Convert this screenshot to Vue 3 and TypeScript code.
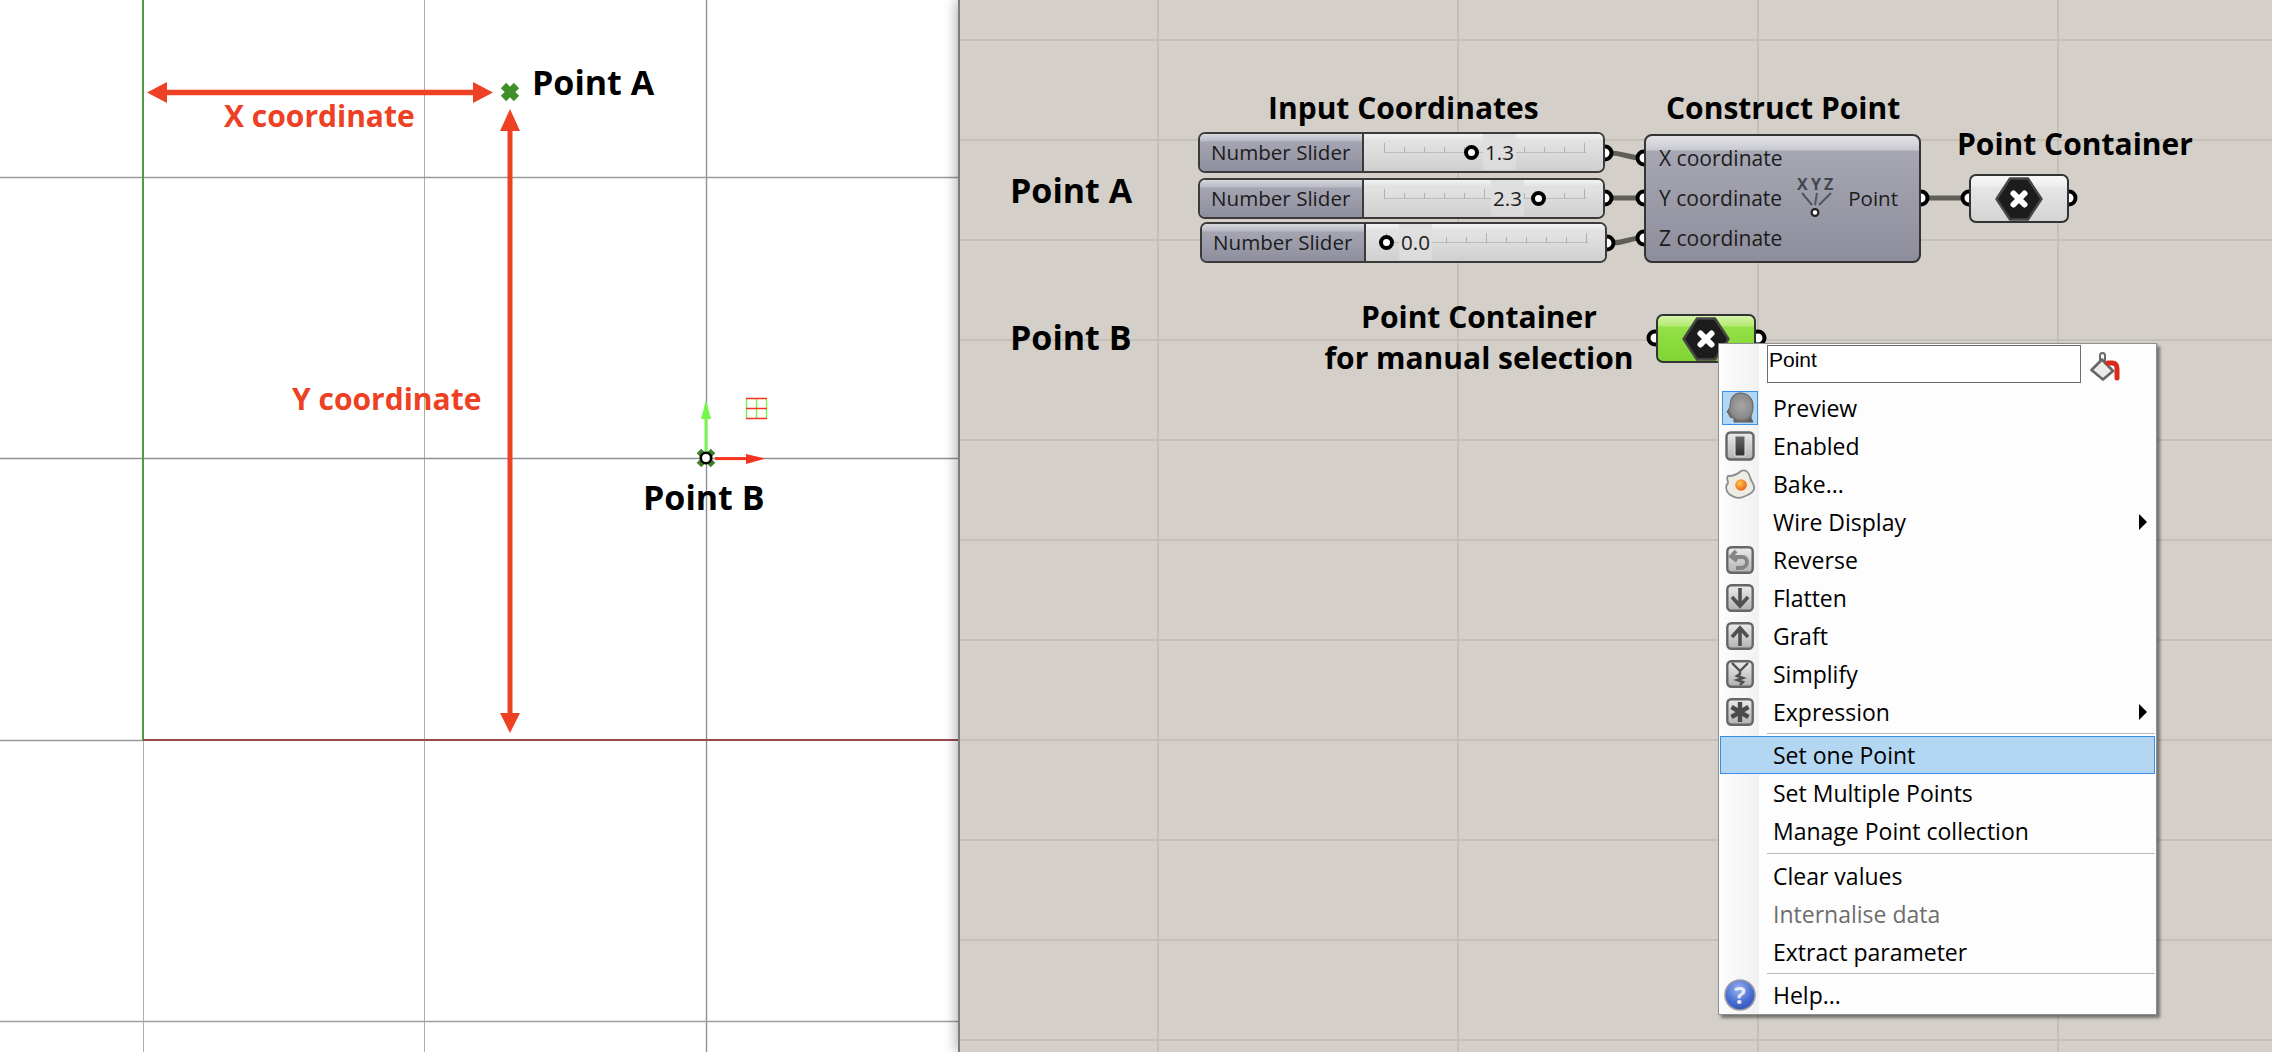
<script setup lang="ts">
interface Slider {
  x: number
  y: number
  knob: number
  textX: number
  value: string
}

interface Label {
  text: string
  x: number
  y: number
}

interface MenuItem {
  label?: string
  icon?: string
  submenu?: boolean
  active?: boolean
  disabled?: boolean
  sep?: 'normal' | 'wide'
}

const sliders: Slider[] = [
  { x: 238, y: 132, knob: 273, textX: 287, value: '1.3' },
  { x: 238, y: 178, knob: 340, textX: 295, value: '2.3' },
  { x: 240, y: 222, knob: 186, textX: 201, value: '0.0' }
]

const ticks = Array.from({ length: 11 }, (_, i) => ({ x: i * 20 + 1, tall: i === 0 || i === 5 || i === 10 }))

const leftLabels: Label[] = [
  { text: 'Point A', x: 532, y: 60 },
  { text: 'Point B', x: 643, y: 475 }
]

const canvasLabels: Label[] = [
  { text: 'Point A', x: 50, y: 168 },
  { text: 'Point B', x: 50, y: 315 }
]

const headings: Label[] = [
  { text: 'Input Coordinates', x: 308, y: 87 },
  { text: 'Construct Point', x: 706, y: 87 },
  { text: 'Point Container', x: 997, y: 123 }
]

const containers = [
  { x: 1009, y: 174, selected: false },
  { x: 696, y: 314, selected: true }
]

const menuItems: MenuItem[] = [
  { label: 'Preview', icon: 'preview' },
  { label: 'Enabled', icon: 'enabled' },
  { label: 'Bake...', icon: 'bake' },
  { label: 'Wire Display', submenu: true },
  { label: 'Reverse', icon: 'reverse' },
  { label: 'Flatten', icon: 'flatten' },
  { label: 'Graft', icon: 'graft' },
  { label: 'Simplify', icon: 'simplify' },
  { label: 'Expression', icon: 'expression', submenu: true },
  { sep: 'normal' },
  { label: 'Set one Point', active: true },
  { label: 'Set Multiple Points' },
  { label: 'Manage Point collection' },
  { sep: 'wide' },
  { label: 'Clear values' },
  { label: 'Internalise data', disabled: true },
  { label: 'Extract parameter' },
  { sep: 'normal' },
  { label: 'Help...', icon: 'help' }
]

const ports: [number, number][] = [
  [645, 153], [645, 198], [647, 243],
  [684, 158], [684, 198], [684, 238],
  [961, 198], [1009, 198], [1109, 198],
  [695, 338], [798, 338]
]

const wires: string[] = [
  'M650 153 C664 153 668 158 682 158',
  'M650 198 L682 198',
  'M652 243 C666 243 668 238 682 238',
  'M966 198 L1006 198'
]
</script>

<template>
  <div class="page">
    <svg class="defs" width="0" height="0">
      <defs>
        <linearGradient id="btn-fill" x1="0" y1="0" x2="0" y2="1">
          <stop offset="0" stop-color="#ececec" />
          <stop offset="1" stop-color="#b2b2b2" />
        </linearGradient>
        <linearGradient id="switch-fill" x1="0" y1="0" x2="0" y2="1">
          <stop offset="0" stop-color="#6a6a6a" />
          <stop offset="1" stop-color="#2e2e2e" />
        </linearGradient>
        <radialGradient id="head-fill" cx="0.55" cy="0.45" r="0.6">
          <stop offset="0" stop-color="#a6a6a6" />
          <stop offset="0.7" stop-color="#8a8a8a" />
          <stop offset="1" stop-color="#5a5a5a" />
        </radialGradient>
        <radialGradient id="yolk-fill" cx="0.4" cy="0.35" r="0.7">
          <stop offset="0" stop-color="#ffc94a" />
          <stop offset="1" stop-color="#ea5a12" />
        </radialGradient>
        <radialGradient id="help-fill" cx="0.45" cy="0.3" r="0.8">
          <stop offset="0" stop-color="#9db4ee" />
          <stop offset="0.55" stop-color="#4a6fd6" />
          <stop offset="1" stop-color="#2a49b0" />
        </radialGradient>
      </defs>
    </svg>

    <section class="viewport">
      <svg class="scene" width="960" height="1052" viewBox="0 0 960 1052">
        <g fill="none">
          <path d="M424.5 0V1052" stroke="#adadad" />
          <path d="M706.5 0V1052" stroke="#8d9194" stroke-width="1.4" />
          <path d="M0 177.5H960" stroke="#9a9a9a" stroke-width="1.6" />
          <path d="M0 458.5H960" stroke="#8c9396" stroke-width="1.6" />
          <path d="M0 740.5H143" stroke="#9a9a9a" stroke-width="1.6" />
          <path d="M0 1021.5H960" stroke="#a0a0a0" stroke-width="1.4" />
          <path d="M143.5 741V1052" stroke="#adadad" />
          <path d="M143 0V741" stroke="#4f9a45" stroke-width="2" />
          <path d="M143 740H960" stroke="#99494a" stroke-width="2" />
        </g>
        <g fill="#ee4023">
          <path d="M147 92.5 167 82V89.8H473V82L493 92.5 473 103V95.2H167V103Z" />
          <path d="M510 109 520 131H512.5V713H520L510 733 500 713H507.5V131H500Z" />
        </g>
        <path d="M503.5 85.5 516.5 98.5M516.5 85.5 503.5 98.5" stroke="#3f8f2a" stroke-width="7.5" fill="none" />
        <g>
          <path d="M699 451 713 465M713 451 699 465" stroke="#3c7f26" stroke-width="6.5" fill="none" />
          <path d="M706 452V418" stroke="#74f64a" stroke-width="3" />
          <path d="M706 400 711 419H701Z" fill="#74f64a" />
          <path d="M715 458.6H747" stroke="#f6341f" stroke-width="3" />
          <path d="M746 454 765 458.6 746 464Z" fill="#f6341f" />
          <circle cx="706" cy="458" r="5.2" fill="#fff" stroke="#000" stroke-width="2.6" />
        </g>
        <g fill="none" stroke-width="1.4">
          <path d="M746.5 398V419M756.5 398V419M766.5 398V419" stroke="#74f64a" />
          <path d="M746 398.5H767M746 408.5H767M746 418.5H767" stroke="#f6341f" />
        </g>
      </svg>
      <span v-for="l in leftLabels" :key="l.text" class="title" :style="{ left: l.x + 'px', top: l.y + 'px' }">{{ l.text }}</span>
      <span class="axis axis-x">X coordinate</span>
      <span class="axis axis-y">Y coordinate</span>
    </section>

    <section class="canvas">
      <svg class="wires" width="1312" height="1052" viewBox="0 0 1312 1052">
        <path v-for="w in wires" :key="w" :d="w" fill="none" stroke="#5f5e57" stroke-width="5" />
        <circle v-for="p in ports" :key="p[0] + '-' + p[1]" :cx="p[0]" :cy="p[1]" r="6.5" fill="#fff" stroke="#000" stroke-width="4" />
      </svg>

      <span v-for="l in canvasLabels" :key="l.text" class="title" :style="{ left: l.x + 'px', top: l.y + 'px' }">{{ l.text }}</span>
      <span v-for="h in headings" :key="h.text" class="heading" :style="{ left: h.x + 'px', top: h.y + 'px' }">{{ h.text }}</span>
      <div class="heading manual">Point Container<br />for manual selection</div>

      <div v-for="s in sliders" :key="s.value" class="slider" :style="{ left: s.x + 'px', top: s.y + 'px' }">
        <div class="slider-name">Number Slider</div>
        <div class="slider-track">
          <svg class="ticks" width="204" height="12" viewBox="0 0 204 12">
            <path d="M1 10.5H203" stroke="#bcbcbc" fill="none" />
            <path
              v-for="t in ticks"
              :key="t.x"
              :d="`M${t.x + 0.5} ${t.tall ? 1 : 5}V11`"
              stroke="#b0b0b0"
              fill="none"
            />
          </svg>
          <span class="slider-value" :style="{ left: s.textX - 166 + 'px' }">{{ s.value }}</span>
          <span class="slider-knob" :style="{ left: s.knob - 166 + 'px' }"></span>
        </div>
      </div>

      <div class="construct">
        <div class="inputs">
          <span>X coordinate</span>
          <span>Y coordinate</span>
          <span>Z coordinate</span>
        </div>
        <svg class="xyz" width="54" height="50" viewBox="0 0 54 50">
          <g class="xyz-letters" fill="#45454f">
            <text x="7" y="15.5">X</text>
            <text x="21" y="15.5">Y</text>
            <text x="34" y="15.5">Z</text>
          </g>
          <path d="M12 19 22 31M27 19 25 31M41 19 29 31" stroke="#55555f" stroke-width="2" fill="none" />
          <circle cx="25" cy="38.5" r="3.4" fill="#fff" stroke="#222" stroke-width="2.2" />
        </svg>
        <span class="output">Point</span>
      </div>

      <div
        v-for="c in containers"
        :key="c.x"
        class="container"
        :class="{ selected: c.selected }"
        :style="{ left: c.x + 'px', top: c.y + 'px' }"
      >
        <svg width="48" height="44" viewBox="0 0 48 44">
          <path d="M15 1.5H33L46.5 22 33 42.5H15L1.5 22Z" fill="#1c1c1c" stroke="#474747" stroke-width="2.4" stroke-linejoin="round" />
          <path d="M18.5 16.5 29.5 27.5M29.5 16.5 18.5 27.5" stroke="#fff" stroke-width="6" stroke-linecap="round" />
        </svg>
      </div>

      <div class="menu">
        <div class="name-row">
          <div class="name-input">Point</div>
          <svg class="bucket" width="32" height="32" viewBox="0 0 32 32">
            <path d="M10 12V4.5C10 1 15 1 15 4.5V14" fill="none" stroke="#6a6a6a" stroke-width="2" />
            <path d="M1.5 19 12 8.5 23 20 13 28.5Z" fill="#e8e8e8" fill-opacity="0.85" stroke="#666" stroke-width="2.6" stroke-linejoin="round" />
            <path d="M18 12H22C26 12 27 14 27 18V27" fill="none" stroke="#d92b1c" stroke-width="5" stroke-linecap="round" />
          </svg>
        </div>
        <template v-for="(m, i) in menuItems" :key="i">
          <div v-if="m.sep" class="sep" :class="{ wide: m.sep === 'wide' }"></div>
          <div v-else class="item" :class="{ active: m.active, disabled: m.disabled }">
            <span class="item-icon">
              <span v-if="m.icon === 'preview'" class="checked">
                <svg width="30" height="32" viewBox="0 0 30 32">
                  <path
                    d="M15 1C23 1 28 6 28 14 28 20 26 23 26 26L28 30 9 30V26C5 26 4 24 4 22L2 20 5 15C5 7 8 1 15 1Z"
                    fill="url(#head-fill)"
                    stroke="#5e5e5e"
                    stroke-width="1"
                  />
                </svg>
              </span>
              <svg v-else-if="m.icon === 'enabled'" width="30" height="30" viewBox="0 0 30 30">
                <rect x="1.5" y="1.5" width="27" height="27" rx="4" fill="url(#btn-fill)" stroke="#666" stroke-width="2.4" />
                <rect x="10" y="5" width="10" height="20" rx="1" fill="url(#switch-fill)" stroke="#e2e2e2" />
              </svg>
              <svg v-else-if="m.icon === 'bake'" width="30" height="30" viewBox="0 0 30 30">
                <path
                  d="M3 7C8 7 12 6 16 2 20 0 24 3 25 8 26 13 30 15 29 20 28 25 22 26 18 28 13 30 8 28 4 25 1 22 0 17 3 14 3 11 1 9 3 7Z"
                  fill="#efece4"
                  stroke="#8e8e8e"
                  stroke-width="1.8"
                />
                <circle cx="16" cy="16" r="5.8" fill="url(#yolk-fill)" />
              </svg>
              <svg v-else-if="m.icon === 'help'" width="32" height="32" viewBox="0 0 32 32">
                <circle cx="16" cy="16" r="15" fill="url(#help-fill)" stroke="#9a9aa6" stroke-width="1.6" />
                <text class="help-mark" x="16" y="25" text-anchor="middle" fill="#e8edf8">?</text>
              </svg>
              <svg v-else-if="m.icon" width="28" height="28" viewBox="0 0 28 28">
                <rect x="1.3" y="1.3" width="25.4" height="25.4" rx="4" fill="url(#btn-fill)" stroke="#666" stroke-width="2.4" />
                <path
                  v-if="m.icon === 'reverse'"
                  d="M10 5 5 10.5 11 15M6 11H16C23 11 23 22 14 22H10"
                  fill="none"
                  stroke="#858585"
                  stroke-width="3.8"
                />
                <path v-if="m.icon === 'flatten'" d="M14 4V21M6 13 14 22 22 13" fill="none" stroke="#505050" stroke-width="3.6" />
                <path v-if="m.icon === 'graft'" d="M14 24V7M6 15 14 6 22 15" fill="none" stroke="#505050" stroke-width="3.6" />
                <path v-if="m.icon === 'simplify'" d="M6 3 14 11 22 3M14 11V14L11 16 17 18 11 20 17 22 14 25" fill="none" stroke="#505050" stroke-width="2.4" />
                <path v-if="m.icon === 'expression'" d="M14 4V24M5.5 9 22.5 19M22.5 9 5.5 19" fill="none" stroke="#4a4a4a" stroke-width="4.4" />
              </svg>
            </span>
            <span class="item-label">{{ m.label }}</span>
            <span v-if="m.submenu" class="caret"></span>
          </div>
        </template>
      </div>
    </section>
  </div>
</template>

<style scoped>
.page {
  display: flex;
  width: 2272px;
  height: 1052px;
  overflow: hidden;
  font-family: 'Open Sans', sans-serif;
}

.defs {
  position: absolute;
}

.viewport {
  position: relative;
  flex: 0 0 960px;
  background: #fff;
}

.scene {
  display: block;
}

.title {
  position: absolute;
  font-size: 34px;
  line-height: 44px;
  font-weight: 700;
  color: #000;
  white-space: nowrap;
}

.axis {
  position: absolute;
  font-size: 30px;
  line-height: 40px;
  font-weight: 700;
  color: #ee4023;
  white-space: nowrap;
}

.axis-x {
  left: 224px;
  top: 96px;
}

.axis-y {
  left: 292px;
  top: 379px;
}

.canvas {
  position: relative;
  flex: 1;
  background-color: #d4d0c9;
  background-image:
    linear-gradient(90deg, #c4c0b8 2px, transparent 2px),
    linear-gradient(#c4c0b8 2px, transparent 2px);
  background-size: 300px 100%, 100% 100px;
  background-position: 197px 0, 0 39px;
  box-shadow: -2px 0 0 #7c7c7c, -4px 0 12px rgba(0, 0, 0, 0.3);
}

.wires {
  position: absolute;
  left: 0;
  top: 0;
}

.heading {
  position: absolute;
  font-size: 30px;
  line-height: 41px;
  font-weight: 700;
  color: #000;
  white-space: nowrap;
}

.manual {
  left: 364px;
  top: 296px;
  width: 310px;
  text-align: center;
}

.slider {
  position: absolute;
  display: flex;
  width: 407px;
  height: 41px;
  box-sizing: border-box;
  border: 2px solid #3b3b3b;
  border-radius: 7px;
  overflow: hidden;
  color: #1c1c1c;
  font-size: 20.6px;
}

.slider-name {
  flex: 0 0 164px;
  box-sizing: border-box;
  padding-left: 11px;
  line-height: 36px;
  border-right: 2px solid #3b3b3b;
  background: linear-gradient(#d8d8de 0, #b9b9c4 7px, #a5a5b2 8px, #8e8e9e 100%);
  white-space: nowrap;
}

.slider-track {
  position: relative;
  flex: 1;
  background: linear-gradient(#f3f3f3 0, #dedede 8px, #e2e2e2 9px, #cfcfcf 100%);
}

.ticks {
  position: absolute;
  left: 19px;
  top: 8px;
}

.slider-value {
  position: absolute;
  top: 0;
  line-height: 36px;
  padding: 0 2px;
  margin-left: -2px;
  height: 36px;
  background: linear-gradient(#e0e0e0, #dbdbdb);
}

.slider-knob {
  position: absolute;
  top: 11px;
  width: 15px;
  height: 15px;
  margin-left: -7.5px;
  box-sizing: border-box;
  border: 4px solid #000;
  border-radius: 50%;
  background: #fff;
}

.construct {
  position: absolute;
  left: 684px;
  top: 134px;
  width: 277px;
  height: 129px;
  box-sizing: border-box;
  display: flex;
  align-items: center;
  padding: 0 21px 0 13px;
  border: 2px solid #333;
  border-radius: 8px;
  background: linear-gradient(#e4e4e8 0, #c8c8d0 14px, #a7a7b4 15px, #8d8d9b 100%);
  color: #1c1c1c;
  font-size: 21px;
}

.inputs {
  display: flex;
  flex-direction: column;
  margin-top: -2px;
}

.inputs span {
  line-height: 40px;
  white-space: nowrap;
}

.xyz {
  margin-left: 8px;
  flex: none;
}

.xyz-letters {
  font-family: 'Open Sans', sans-serif;
  font-weight: 700;
  font-size: 16px;
}

.output {
  margin-left: auto;
  margin-top: -2px;
  font-size: 20.5px;
}

.container {
  position: absolute;
  display: flex;
  align-items: center;
  justify-content: center;
  width: 100px;
  height: 49px;
  box-sizing: border-box;
  border: 2px solid #333;
  border-radius: 7px;
  background: linear-gradient(#f7f7f7 0, #eeeeee 10px, #e6e6e6 11px, #d4d4d4 100%);
}

.selected {
  background: linear-gradient(#d5f5a8 0, #b4ea72 10px, #93e146 11px, #80d434 100%);
}

.menu {
  position: absolute;
  left: 758px;
  top: 343px;
  width: 439px;
  box-sizing: border-box;
  border: 1px solid #8f8f8f;
  background: linear-gradient(90deg, #fdfdfd 0, #f1f1f1 40px, #fdfdfd 40px);
  box-shadow: 3px 3px 3px rgba(0, 0, 0, 0.45);
  color: #000;
  font-size: 23px;
}

.name-row {
  display: flex;
  align-items: center;
  height: 45px;
  padding-left: 48px;
}

.name-input {
  box-sizing: border-box;
  width: 314px;
  height: 38px;
  margin-bottom: 5px;
  padding-left: 1px;
  border: 1px solid #6e6e6e;
  background: #fff;
  font-family: 'Liberation Sans', sans-serif;
  font-size: 21px;
  line-height: 28px;
}

.bucket {
  margin-left: 9px;
}

.item {
  display: flex;
  align-items: center;
  height: 38px;
  box-sizing: border-box;
}

.item.active {
  margin: 0 1px;
  border: 1px solid #3a8ee6;
  background: #b3d7f3;
}

.item.disabled {
  color: #6d6d6d;
}

.item-icon {
  flex: none;
  display: flex;
  align-items: center;
  justify-content: center;
  width: 41px;
  margin-right: 13px;
}

.item.active .item-icon {
  width: 39px;
}

.checked {
  display: flex;
  align-items: center;
  justify-content: center;
  width: 36px;
  height: 34px;
  box-sizing: border-box;
  border: 1px solid #3a8ee6;
  background: #b3d7f3;
}

.help-mark {
  font-family: 'Open Sans', sans-serif;
  font-weight: 700;
  font-size: 24px;
}

.item-label {
  white-space: nowrap;
}

.caret {
  margin-left: auto;
  margin-right: 9px;
  border-left: 8px solid #000;
  border-top: 8px solid transparent;
  border-bottom: 8px solid transparent;
}

.sep {
  position: relative;
  height: 5px;
}

.sep.wide {
  height: 7px;
}

.sep::after {
  content: '';
  position: absolute;
  left: 48px;
  right: 1px;
  top: calc(50% - 1px);
  height: 1px;
  background: #bcbcbc;
}
</style>
